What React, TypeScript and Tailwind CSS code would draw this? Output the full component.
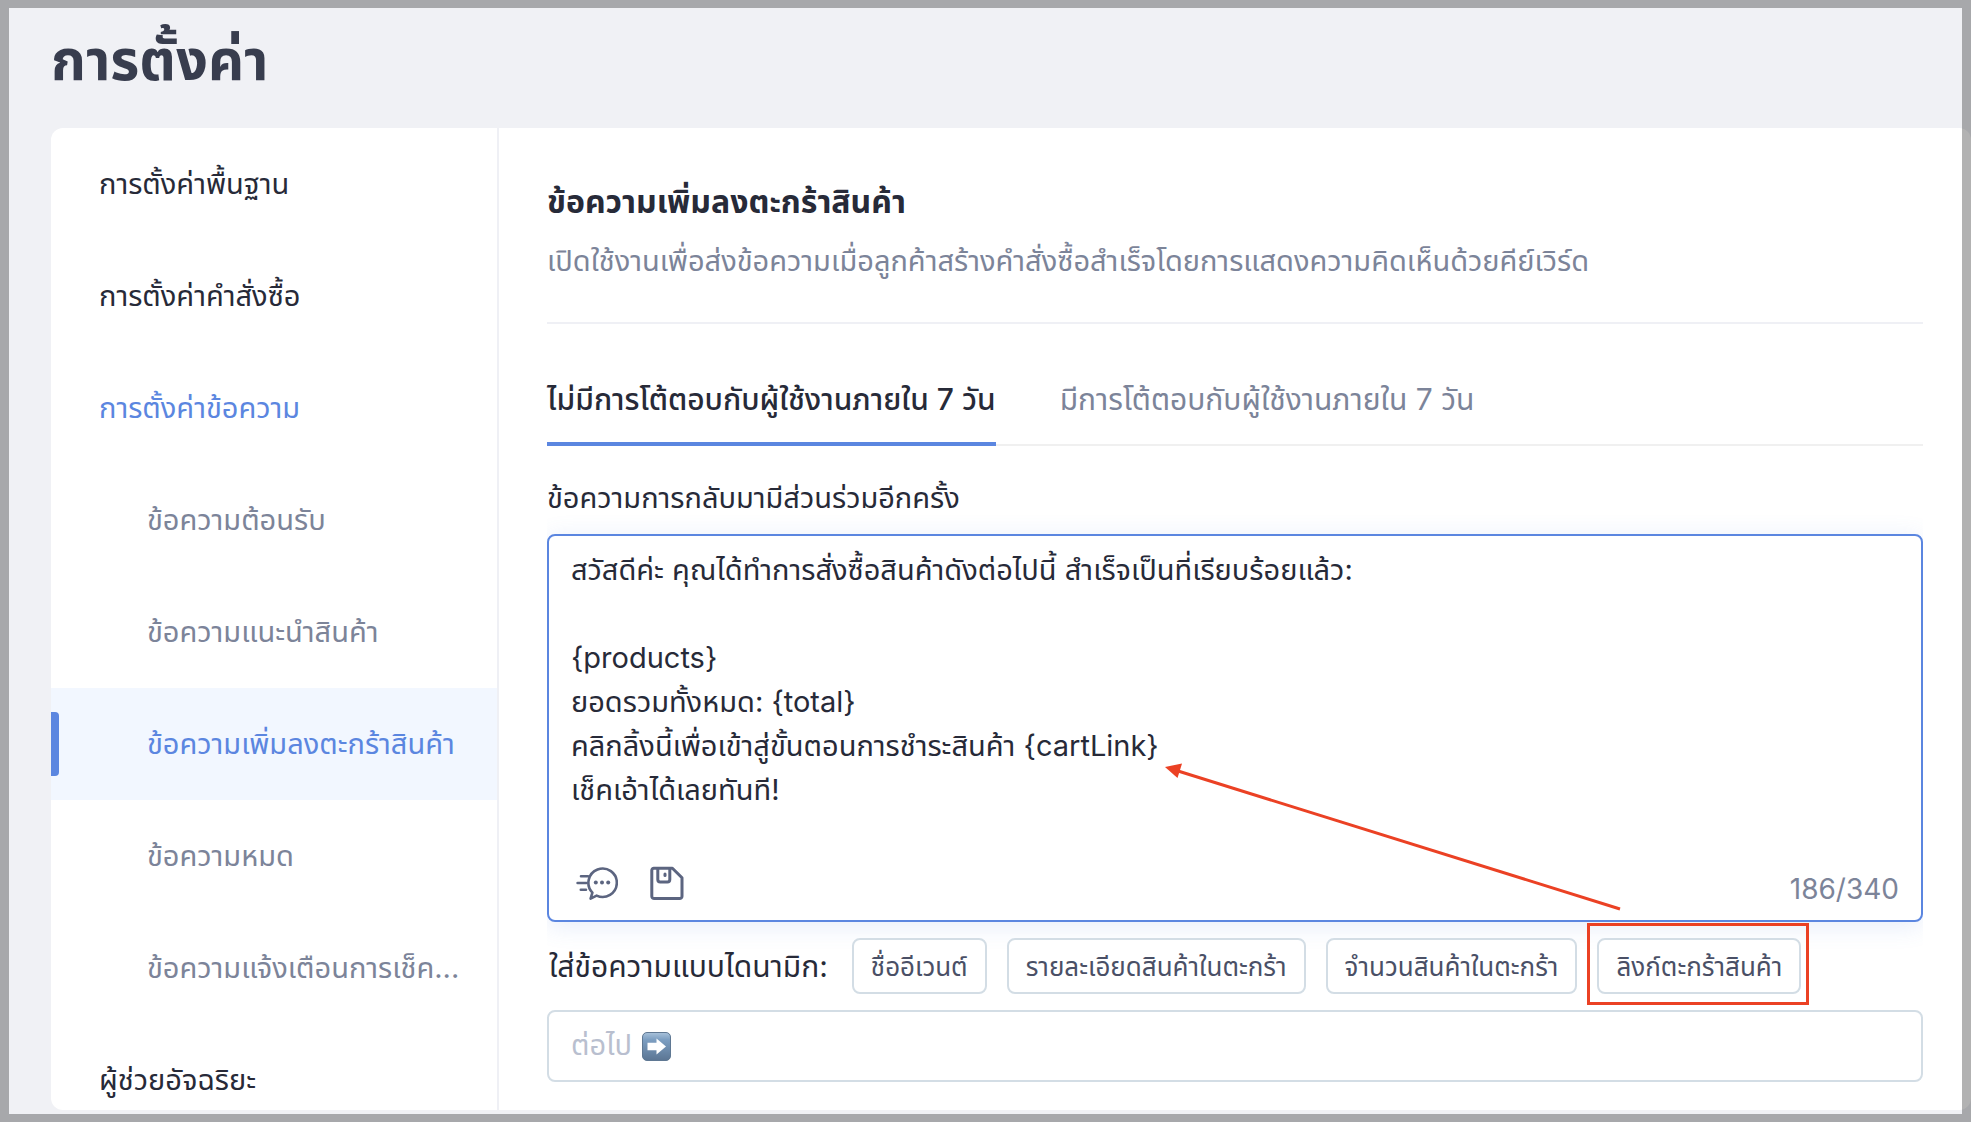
import React, { useState } from "react";
import clsx from "clsx";

interface NavItem {
  title: string;
  level: "main" | "sub";
}

const navItems: NavItem[] = [
  { title: "การตั้งค่าพื้นฐาน", level: "main" },
  { title: "การตั้งค่าคำสั่งซื้อ", level: "main" },
  { title: "การตั้งค่าข้อความ", level: "main" },
  { title: "ข้อความต้อนรับ", level: "sub" },
  { title: "ข้อความแนะนำสินค้า", level: "sub" },
  { title: "ข้อความเพิ่มลงตะกร้าสินค้า", level: "sub" },
  { title: "ข้อความหมด", level: "sub" },
  { title: "ข้อความแจ้งเตือนการเช็ค...", level: "sub" },
  { title: "ผู้ช่วยอัจฉริยะ", level: "main" },
];

const openSection = 2;
const activePage = 5;

const tabs = [
  "ไม่มีการโต้ตอบกับผู้ใช้งานภายใน 7 วัน",
  "มีการโต้ตอบกับผู้ใช้งานภายใน 7 วัน",
];

const dynamicFields = [
  "ชื่ออีเวนต์",
  "รายละเอียดสินค้าในตะกร้า",
  "จำนวนสินค้าในตะกร้า",
  "ลิงก์ตะกร้าสินค้า",
];

const defaultMessage = `สวัสดีค่ะ คุณได้ทำการสั่งซื้อสินค้าดังต่อไปนี้ สำเร็จเป็นที่เรียบร้อยแล้ว:

{products}
ยอดรวมทั้งหมด: {total}
คลิกลิ้งนี้เพื่อเข้าสู่ขั้นตอนการชำระสินค้า {cartLink}
เช็คเอ้าได้เลยทันที!`;

const QuickReplyIcon = () => (
  <svg
    width="42"
    height="36"
    viewBox="0 0 42 36"
    fill="none"
    stroke="currentColor"
    strokeWidth="2.6"
    strokeLinecap="round"
    strokeLinejoin="round"
  >
    <path d="M16.4 27.6A14.2 14.2 0 1 1 20.6 30.6L14.6 33.6Z" />
    <path d="M5 11.2H12M1.6 18H10.4M4.8 24.8H10" />
    <g fill="currentColor" stroke="none">
      <circle cx="19.8" cy="17.4" r="2" />
      <circle cx="26" cy="17.4" r="2" />
      <circle cx="32.2" cy="17.4" r="2" />
    </g>
  </svg>
);

const SaveIcon = () => (
  <svg
    width="34"
    height="36"
    viewBox="0 0 34 36"
    fill="none"
    stroke="currentColor"
    strokeWidth="3"
    strokeLinejoin="round"
    strokeLinecap="round"
  >
    <path d="M3.8 3.2H22.4L32 12.8V31.2A2.4 2.4 0 0 1 29.6 33.6H4.2A2.4 2.4 0 0 1 1.8 31.2V5.2A2 2 0 0 1 3.8 3.2Z" />
    <path d="M7.8 4V14.6A2.4 2.4 0 0 0 10.2 17H17.4A2.4 2.4 0 0 0 19.8 14.6V4" />
    <path d="M15 9V10.6" />
  </svg>
);

const NextEmoji = () => (
  <svg width="29" height="29" viewBox="0 0 29 29" className="shrink-0">
    <defs>
      <linearGradient id="emoji" x1="0" y1="0" x2="0" y2="1">
        <stop offset="0" stopColor="#a9c2da" />
        <stop offset="0.25" stopColor="#7d9fc2" />
        <stop offset="1" stopColor="#5b7593" />
      </linearGradient>
    </defs>
    <rect x="0.5" y="0.5" width="28" height="28" rx="4.5" fill="url(#emoji)" stroke="#5f7893" />
    <path d="M5.5 10.8H14.5V6.6L24 14.5L14.5 22.4V18.2H5.5Z" fill="#fff" />
  </svg>
);

const Sidebar = () => {
  return (
    <nav className="w-[448px] shrink-0 border-r-2 border-[#eff0f5]">
      <ul>
        {navItems.map((item, index) => (
          <li key={item.title} className="relative">
            {index === activePage && (
              <span className="absolute left-0 top-6 h-16 w-2 rounded-r bg-[#5b86e0]" />
            )}
            <a
              href="#"
              className={clsx(
                "flex h-28 items-center whitespace-nowrap text-[29px]",
                item.level === "main" ? "pl-12" : "pl-24",
                index === activePage && "bg-[#f2f7ff]",
                index === activePage || index === openSection
                  ? "text-[#5b86e0]"
                  : item.level === "main"
                    ? "text-[#272a38]"
                    : "text-[#7c8499]"
              )}
            >
              {item.title}
            </a>
          </li>
        ))}
      </ul>
    </nav>
  );
};

const MessageEditor = () => {
  const [message, setMessage] = useState(defaultMessage);

  return (
    <div className="overflow-x-clip">
      <div className="relative rounded-lg border-2 border-[#5b86e0] bg-white pb-2 shadow-[0_4px_24px_rgba(91,134,224,0.16)]">
        <textarea
          id="message"
          value={message}
          onChange={(e) => setMessage(e.target.value)}
          className="block h-[318px] w-full resize-none overflow-hidden bg-transparent px-[22px] pt-3 text-[29px] leading-[44px] text-[#272a38] outline-none"
        />
        <div className="flex h-[58px] items-center justify-between px-[22px]">
          <div className="flex items-center gap-8 pl-[5px] text-[#5c6580]">
            <button type="button" aria-label="Quick reply">
              <QuickReplyIcon />
            </button>
            <button type="button" aria-label="Save">
              <SaveIcon />
            </button>
          </div>
          <span className="pt-3 text-[28px] leading-[44px] text-[#7c8499]">186/340</span>
        </div>
        {/* arrow from the link button to {cartLink} */}
        <svg
          className="pointer-events-none absolute left-[615px] top-[223px]"
          width="460"
          height="156"
          viewBox="0 0 460 156"
        >
          <path d="M14 12L456 150" stroke="#eb4124" strokeWidth="3" fill="none" />
          <path d="M1 8L18 4.5L13.5 19Z" fill="#eb4124" />
        </svg>
      </div>
    </div>
  );
};

const App = () => {
  const [tab, setTab] = useState(0);

  return (
    <div className="relative flex h-screen flex-col overflow-hidden bg-[#f0f1f5] pb-3 pl-[51px] font-['Inter','Noto_Sans_Thai','Noto_Sans',sans-serif]">
      <h1 className="flex h-32 items-center pb-2 text-[56px] font-bold text-[#383d4e]">การตั้งค่า</h1>

      <div className="flex min-h-0 flex-1 overflow-hidden rounded-xl bg-white">
        <Sidebar />

        <main className="min-w-0 flex-1 pl-12 pr-12 pt-12">
          <h2 className="text-[32px] font-bold leading-[52px] text-[#272a38]">
            ข้อความเพิ่มลงตะกร้าสินค้า
          </h2>
          <p className="mt-2 border-b-2 border-[#eff0f5] pb-9 text-[29px] leading-[50px] text-[#7c8499]">
            เปิดใช้งานเพื่อส่งข้อความเมื่อลูกค้าสร้างคำสั่งซื้อสำเร็จโดยการแสดงความคิดเห็นด้วยคีย์เวิร์ด
          </p>

          <div role="tablist" className="mt-9 flex h-[86px] gap-16 border-b-2 border-[#f0f0f0]">
            {tabs.map((title, index) => (
              <button
                key={title}
                type="button"
                role="tab"
                aria-selected={tab === index}
                onClick={() => setTab(index)}
                className={clsx(
                  "-mb-0.5 whitespace-nowrap border-b-4 pb-1 text-[30px]",
                  tab === index
                    ? "border-[#5b86e0] font-medium text-[#272a38]"
                    : "border-transparent text-[#7c8499]"
                )}
              >
                {title}
              </button>
            ))}
          </div>

          <label htmlFor="message" className="mt-7 block pb-3 text-[29px] leading-[48px] text-[#272a38]">
            ข้อความการกลับมามีส่วนร่วมอีกครั้ง
          </label>
          <MessageEditor />

          <div className="flex items-center gap-5 pt-4">
            <span className="whitespace-nowrap pl-0.5 pr-1 text-[30px] leading-[44px] text-[#272a38]">
              ใส่ข้อความแบบไดนามิก:
            </span>
            {dynamicFields.map((field, index) => (
              <div key={field} className="relative">
                <button
                  type="button"
                  className="h-14 whitespace-nowrap rounded-lg border-2 border-[#d3dde5] bg-white px-[17px] text-[26px] text-[#4a5066]"
                >
                  {field}
                </button>
                {index === dynamicFields.length - 1 && (
                  <span className="pointer-events-none absolute -bottom-[11px] -left-2.5 -right-2 -top-[15px] border-[3px] border-[#eb4124]" />
                )}
              </div>
            ))}
          </div>

          <div className="mt-4 flex h-[72px] items-center gap-2.5 rounded-lg border-2 border-[#d3dde5] px-[22px]">
            <input
              type="text"
              aria-label="ต่อไป"
              placeholder="ต่อไป"
              className="field-sizing-content h-full text-[29px] text-[#272a38] outline-none placeholder:text-[#b9bfcf]"
            />
            <NextEmoji />
          </div>
        </main>
      </div>

      <div className="pointer-events-none absolute inset-0 border-x-[9px] border-y-8 border-black/30" />
    </div>
  );
};

export default App;
